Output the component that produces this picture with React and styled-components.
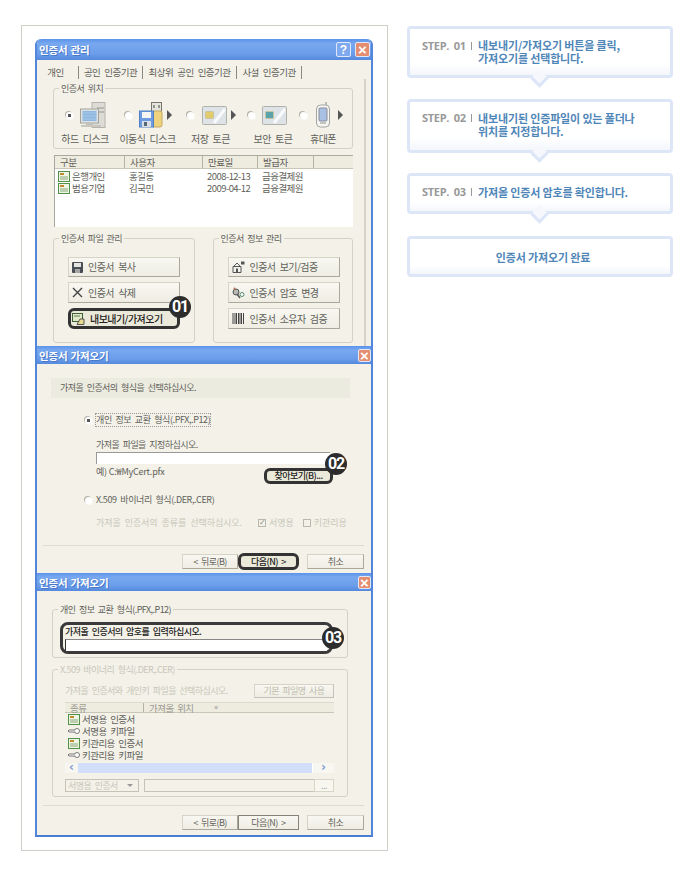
import React from 'react';
import styled, { createGlobalStyle, css } from 'styled-components';

const GlobalStyle = createGlobalStyle`
  html, body { margin: 0; padding: 0; background: #fff; }
  body { font-family: "Noto Sans CJK KR", "Noto Sans", sans-serif; }
`;

const dlgText = css`
  font-size: 9px;
  line-height: 12px;
  letter-spacing: -0.55px;
  word-spacing: 2px;
  white-space: nowrap;
  color: #5f5f5a;
`;

const Page = styled.div`
  display: flex;
  align-items: flex-start;
  width: 690px;
  height: 873px;
  padding: 25px 0 0 21px;
  box-sizing: border-box;
`;

const Frame = styled.div`
  width: 367px;
  box-sizing: border-box;
  border: 1px solid #cfcfc8;
  padding: 13px 14px 13px 13px;
`;

const Win = styled.section`
  display: flex;
  flex-direction: column;
  height: ${p => p.$h}px;
  box-sizing: border-box;
  position: relative;
  overflow: hidden;
  background: #f3f1e8;
  border-left: 2px solid #5286da;
  border-right: 2px solid #5286da;
  border-bottom: ${p => (p.$last ? 2 : 0)}px solid #4a7ed2;
  border-radius: ${p => (p.$round ? '6px 6px 0 0' : '0')};
`;

const TitleBar = styled.header`
  flex: none;
  display: flex;
  align-items: center;
  height: ${p => p.$h}px;
  margin: 0 -2px;
  padding: 0 ${p => p.$pr}px 0 4px;
  gap: 4px;
  background: linear-gradient(180deg, #5a93ea 0%, #78a8ef 22%, #6b9dea 70%, #5589dd 100%);
`;

const TitleText = styled.h1`
  flex: 1;
  margin: 0;
  font-size: 10.5px;
  font-weight: 700;
  letter-spacing: -0.2px;
  word-spacing: 1px;
  color: #fff;
  text-shadow: 1px 1px 0 #4a78c8;
`;

const CapBtn = styled.span`
  width: ${p => p.$size}px;
  height: ${p => p.$size}px;
  box-sizing: border-box;
  display: flex;
  align-items: center;
  justify-content: center;
  border: 1px solid #dfe8fa;
  border-radius: 2px;
  color: #fff;
  font: 700 ${p => (p.$close ? 15 : 12)}px/1 "Liberation Sans", sans-serif;
  background: ${p => (p.$close ? '#e48d70' : '#7fa9ee')};
`;

const Tabs = styled.nav`
  display: flex;
  align-items: center;
  height: 13px;
  margin: 6px 0 0 3px;
`;

const Tab = styled.span`
  ${dlgText}
  font-size: 9.5px;
  word-spacing: 2.5px;
  box-sizing: border-box;
  width: ${p => p.$w}px;
  padding-right: ${p => p.$pr || 0}px;
  text-align: center;
  border-right: 1px solid #8b8a80;
  line-height: 13px;
`;

const Panel = styled.div`
  margin: 0 5px 0 4px;
  padding: 9px 11px 0 12px;
  border-right: 2px solid #d6d3c6;
  flex: 1;
`;

const Group = styled.div`
  position: relative;
  box-sizing: border-box;
  width: ${p => p.$w}px;
  height: ${p => p.$h}px;
  border: 1px solid #d4d2c4;
  border-radius: 3px;
`;

const Legend = styled.span`
  ${dlgText}
  position: absolute;
  top: -6px;
  left: 5px;
  padding: 0 2px;
  background: #f3f1e8;
  color: ${p => (p.$off ? '#c9c7ba' : '#5f5f5a')};
`;

const Locations = styled.div`
  display: flex;
  padding-top: 13px;
`;

const Location = styled.div`
  display: flex;
  flex-direction: column;
  width: ${p => p.$w}px;
`;

const LocTop = styled.div`
  display: flex;
  align-items: center;
  height: 26px;
  padding-left: ${p => p.$pad}px;
`;

const LocLabel = styled.span`
  ${dlgText}
  margin-top: 5px;
  padding-left: ${p => p.$pl || 0}px;
  text-align: center;
  font-size: 10px;
  word-spacing: 2.5px;
`;

const Radio = styled.span`
  flex: none;
  width: 7px;
  height: 7px;
  margin-right: ${p => p.$mr || 0}px;
  border-radius: 50%;
  background: ${p => (p.$on ? 'radial-gradient(circle, #555 0 1.5px, #fff 2px)' : '#fff')};
  box-shadow: -1px -1px 0 #b5b3a8, 1px 1px 0 #fbfaf5;
`;

const Pointer = styled.span`
  flex: none;
  width: 0;
  height: 0;
  margin-left: ${p => p.$ml}px;
  border-left: 5px solid #555;
  border-top: 5px solid transparent;
  border-bottom: 5px solid transparent;
`;

const CertList = styled.div`
  box-sizing: border-box;
  height: 72px;
  margin: 6px 0 11px 1px;
  width: 299px;
  background: #fff;
  border-top: 1px solid #aaa99f;
  border-left: 1px solid #aaa99f;
`;

const ListHead = styled.div`
  display: flex;
  height: ${p => p.$h}px;
  margin-bottom: ${p => p.$mb || 0}px;
  background: #eeebdf;
  border-bottom: 1px solid #c9c6b8;
  border-top: ${p => (p.$line ? '1px solid #dcdacd' : '0')};
  position: relative;
`;

const HeadCell = styled.span`
  ${dlgText}
  font-size: 9.5px;
  line-height: ${p => p.$lh || 12}px;
  box-sizing: border-box;
  width: ${p => p.$w}px;
  padding-left: ${p => p.$pad || 5}px;
  border-right: ${p => (p.$end ? 0 : 1)}px solid #b5b3a6;
  color: ${p => (p.$off ? '#9a998f' : '#5f5f5a')};
`;

const SortMark = styled.span`
  position: absolute;
  left: 149px;
  top: 1px;
  font-size: 5px;
  line-height: 5px;
  color: #888;
`;

const ListRow = styled.div`
  display: flex;
  align-items: center;
  height: 12px;
  padding-left: ${p => p.$pad || 3}px;
`;

const Cell = styled.span`
  ${dlgText}
  display: flex;
  align-items: center;
  gap: 2px;
  width: ${p => p.$w}px;
  font-size: 9.5px;
`;

const ManageRow = styled.div`
  display: flex;
  gap: 18px;
`;

const BtnStack = styled.div`
  display: flex;
  flex-direction: column;
  gap: 5px;
  padding: 18px 0 0 14px;
`;

const Btn = styled.button`
  ${dlgText}
  display: flex;
  align-items: center;
  justify-content: ${p => (p.$left ? 'flex-start' : 'center')};
  gap: 5px;
  box-sizing: border-box;
  width: ${p => p.$w}px;
  height: ${p => p.$h}px;
  padding: 0 0 0 ${p => (p.$left ? (p.$mark ? 1 : 3) : 0)}px;
  margin: 0;
  font-family: inherit;
  font-size: ${p => (p.$left ? '10px' : '9px')};
  word-spacing: ${p => (p.$left ? 2.5 : 2)}px;
  background: linear-gradient(180deg, #f8f7f1, #efede3);
  border: 1px solid #d6d4c6;
  border-right-color: ${p => (p.$off ? '#c4c2b6' : '#aaa89b')};
  border-bottom-color: ${p => (p.$off ? '#c4c2b6' : '#aaa89b')};
  color: ${p => (p.$off ? '#bdbbae' : '#5f5f5a')};

  ${p => p.$primary && css`
    border: 1px solid #85847a;
  `}

  ${p => p.$mark && css`
    position: relative;
    border: 3px solid #333;
    border-radius: 6px;
    color: #222;
    font-weight: 500;
    background: #ebe9d9;
  `}
`;

const Badge = styled.span`
  position: absolute;
  top: ${p => p.$top}px;
  left: ${p => p.$left}px;
  width: 22px;
  height: 22px;
  border-radius: 50%;
  background: #2c2c2c;
  color: #fff;
  display: flex;
  align-items: center;
  justify-content: center;
  font: 700 16px/1 "Roboto", sans-serif;
  letter-spacing: -1.2px;
  z-index: 2;
`;

const Band = styled.div`
  ${dlgText}
  height: 20px;
  box-sizing: border-box;
  margin: 14px 21px 0 14px;
  padding-left: 9px;
  line-height: 20px;
  background: #ecebdf;
`;

const Options = styled.div`
  padding-left: 48px;
`;

const OptionRow = styled.div`
  display: flex;
  align-items: center;
  gap: 4px;
  height: 12px;
  margin-top: ${p => p.$mt}px;
`;

const OptionLabel = styled.span`
  ${dlgText}
  letter-spacing: -0.4px;
  ${p => p.$focus && css`outline: 1px dotted #999;`}
`;

const Sub = styled.div`
  ${dlgText}
  margin: ${p => p.$mt || 0}px 0 0 11px;
  color: ${p => (p.$off ? '#c9c7ba' : '#5f5f5a')};
  display: flex;
  align-items: center;
  gap: ${p => p.$gap || 0}px;
  ${p => p.$off && css`
    letter-spacing: -0.05px;
  `}
`;

const FileInput = styled.div`
  width: 234px;
  height: 12px;
  margin: 1px 0 2px 11px;
  background: #fff;
  border-top: 1px solid #999;
  border-left: 1px solid #999;
  box-sizing: border-box;
`;

const ExampleRow = styled.div`
  display: flex;
  justify-content: space-between;
  width: 237px;
  height: 18px;
  margin-left: 11px;
  align-items: flex-end;
`;

const Example = styled.span`
  ${dlgText}
  align-self: flex-start;
  letter-spacing: -0.2px;
  word-spacing: 0;
`;

const Check = styled.span`
  width: 8px;
  height: 8px;
  margin-left: ${p => p.$ml}px;
  box-sizing: border-box;
  border: 1px solid #b9b7aa;
  color: #8c8b80;
  font: 700 8px/6px "DejaVu Sans", sans-serif;
`;

const Footer = styled.footer`
  flex: none;
  margin: auto 7px 0 6px;
  height: ${p => p.$h}px;
  box-sizing: border-box;
  padding-top: ${p => p.$pt}px;
  border-top: 1px solid #dedcd0;
  display: flex;
  align-items: flex-start;
  justify-content: flex-end;
`;

const NextSlot = styled.div`
  margin: ${p => (p.$mark ? -1 : 0)}px 8px 0 0;
`;

const PassGroup = styled.div`
  margin: 18px 0 0 15px;
`;

const PassBox = styled.div`
  position: relative;
  box-sizing: border-box;
  width: 273px;
  height: 32px;
  margin: 12px 0 0 7px;
  padding: 1px 2px 0 2px;
  border: 3px solid #3a3a3a;
  border-radius: 8px;
`;

const PassLabel = styled.div`
  ${dlgText}
  height: 12px;
  line-height: 12px;
  color: #222;
  font-weight: 500;
`;

const PassInput = styled.div`
  height: 12px;
  margin-top: 1px;
  width: 262px;
  background: #fff;
  border-top: 1px solid #888;
  border-left: 1px solid #333;
  box-sizing: border-box;
`;

const OffGroup = styled.div`
  margin: 11px 0 0 15px;
`;

const OffInner = styled.div`
  padding: 14px 0 0 12px;
  width: 269px;
`;

const OffRow = styled.div`
  display: flex;
  justify-content: space-between;
  align-items: center;
  height: 14px;
`;

const OffText = styled.span`
  ${dlgText}
  color: #c9c7ba;
`;

const OffList = styled.div`
  margin-top: 4px;
`;

const ScrollBar = styled.div`
  display: flex;
  height: 10px;
  margin-top: 2px;
  background: #f7f6f0;
`;

const ScrollEnd = styled.span`
  flex: none;
  width: ${p => p.$w}px;
  text-align: center;
  color: #7f9bd2;
  font: 700 12px/9px "DejaVu Sans", sans-serif;
`;

const ScrollThumb = styled.span`
  flex: 1;
  background: #d3dffa;
  border-right: 1px solid #fff;
`;

const FieldRow = styled.div`
  display: flex;
  margin-top: 6px;
  height: 13px;
`;

const Combo = styled.div`
  ${dlgText}
  color: #c9c7ba;
  display: flex;
  justify-content: space-between;
  align-items: center;
  box-sizing: border-box;
  width: 74px;
  padding: 0 2px;
  border: 1px solid #c5c3b6;
  margin-right: 5px;
`;

const ComboBtn = styled.span`
  width: 0;
  height: 0;
  margin-right: 3px;
  border-top: 3px solid #999;
  border-left: 3px solid transparent;
  border-right: 3px solid transparent;
`;

const PathField = styled.div`
  flex: 1;
  border: 1px solid #c5c3b6;
  border-right: 0;
`;

const Dots = styled.div`
  ${dlgText}
  width: 20px;
  text-align: center;
  color: #aaa;
  background: #f7f6ef;
  border: 1px solid #d8d6c8;
  box-sizing: border-box;
`;

const Steps = styled.aside`
  display: flex;
  flex-direction: column;
  margin: 1px 0 0 19px;
  width: 266px;
`;

const StepBox = styled.div`
  position: relative;
  display: flex;
  align-items: center;
  justify-content: ${p => (p.$center ? 'center' : 'flex-start')};
  box-sizing: border-box;
  height: ${p => p.$h}px;
  margin-bottom: ${p => p.$mb || 0}px;
  padding: ${p => p.$pt || 0}px 0 ${p => p.$pb || 0}px ${p => (p.$center ? 6 : 12)}px;
  border: 3px solid #dce6f6;
  border-radius: 4px;
  background: linear-gradient(180deg, #fff 75%, #f3f6fb 100%);

  ${p => p.$arrow && css`
    &::after {
      content: '';
      position: absolute;
      left: 123px;
      bottom: -10px;
      width: 13px;
      height: 13px;
      box-sizing: border-box;
      transform: rotate(45deg);
      background: #f5f7fc;
      border-right: 3px solid #dce6f6;
      border-bottom: 3px solid #dce6f6;
    }
  `}
`;

const StepNo = styled.span`
  flex: none;
  align-self: flex-start;
  margin-top: ${p => p.$mt}px;
  width: 56px;
  font: 700 11px/13px "Open Sans", sans-serif;
  letter-spacing: -0.3px;
  word-spacing: 2px;
  color: #999;
  white-space: nowrap;
  position: relative;

  &::after {
    content: '';
    position: absolute;
    left: 49px;
    top: 3px;
    width: 1px;
    height: 8px;
    background: #999;
  }
`;

const StepText = styled.p`
  margin: 0;
  font-size: 11px;
  font-weight: 700;
  line-height: 13px;
  letter-spacing: -0.15px;
  color: #4f86b8;
  white-space: nowrap;
`;

const CertIcon = () => (
  <svg width="12" height="11" viewBox="0 0 12 11">
    <rect x="0.5" y="0.5" width="11" height="10" fill="#eef5e4" stroke="#4f9148" />
    <rect x="2" y="2" width="4" height="2" fill="#c58a2c" />
    <path d="M2 6h8M2 8h8" stroke="#8aa87a" />
  </svg>
);

const KeyIcon = () => (
  <svg width="12" height="8" viewBox="0 0 12 8">
    <circle cx="9" cy="4" r="2.5" fill="#fff" stroke="#777" />
    <path d="M7 3H1L0 4l1 1h6" fill="#fff" stroke="#777" />
  </svg>
);

const ComputerIcon = () => (
  <svg width="26" height="26" viewBox="0 0 26 26">
    <rect x="12" y="0.5" width="13" height="25" fill="#dcdbd5" stroke="#b5b4ac" />
    <path d="M17 6h7M17 10h7" stroke="#94938b" />
    <rect x="0.5" y="7" width="18" height="14" fill="#dfe2e2" stroke="#a3a39c" />
    <rect x="2.5" y="9" width="14" height="10" fill="#8db6e0" />
    <path d="M3 11h13M3 14h13M3 17h13" stroke="#a9cbe8" />
    <rect x="6" y="21" width="7" height="2" fill="#c3c2ba" />
    <rect x="1" y="23" width="20" height="2" fill="#c9c8c0" />
  </svg>
);

const RemovableIcon = () => (
  <svg width="25" height="26" viewBox="0 0 25 26">
    <rect x="12.5" y="0.5" width="10" height="9" fill="#e4e3dc" stroke="#77766f" />
    <path d="M15 3v3M20 3v3" stroke="#444" />
    <rect x="13" y="9" width="10" height="16" rx="2" fill="#efd27e" stroke="#c4a860" />
    <rect x="0.5" y="9" width="14" height="16" fill="#6f9ce0" stroke="#4f7fc4" />
    <rect x="3" y="10" width="9" height="6" fill="#f6f6f2" />
    <rect x="3" y="19" width="9" height="6" fill="#d9dde6" />
    <rect x="5" y="20" width="3" height="4" fill="#567" />
  </svg>
);

const TokenIcon = ({ chip }) => (
  <svg width="25" height="19" viewBox="0 0 25 19">
    <rect x="0.5" y="0.5" width="24" height="18" rx="1" fill="#dde3e6" stroke="#b3b2aa" />
    <path d="M12 17L23 3" stroke="#f8fafb" strokeWidth="3" />
    <rect x="3.5" y="5.5" width="8" height="7" rx="1" fill={chip} stroke="#c9c4a0" />
  </svg>
);

const PhoneIcon = () => (
  <svg width="14" height="26" viewBox="0 0 14 26">
    <path d="M10 0v3" stroke="#888" />
    <rect x="0.5" y="3" width="13" height="22" rx="4" fill="#f6f6f2" stroke="#a3a3a0" />
    <rect x="3" y="6" width="8" height="13" rx="1" fill="#a8c0e4" stroke="#8a8c98" />
    <path d="M4 21h6" stroke="#c4c4c0" strokeWidth="2" />
  </svg>
);

const FloppyIcon = () => (
  <svg width="11" height="11" viewBox="0 0 11 11">
    <rect width="11" height="11" rx="1" fill="#4a4f55" />
    <rect x="2" y="1" width="7" height="4" fill="#e4e4e0" />
    <rect x="3" y="7" width="5" height="4" fill="#a5a5a5" />
  </svg>
);

const CrossIcon = () => (
  <svg width="11" height="11" viewBox="0 0 11 11">
    <path d="M1 1l9 9M10 1l-9 9" stroke="#444" strokeWidth="1.4" />
  </svg>
);

const ExportIcon = () => (
  <svg width="13" height="12" viewBox="0 0 13 12">
    <rect x="0.5" y="0.5" width="10" height="8" fill="#dfe9c8" stroke="#3f5f38" />
    <path d="M2 3h6" stroke="#5a7a50" />
    <path d="M5 11.5h7V6H8z" fill="#e8d890" stroke="#555" />
  </svg>
);

const ViewIcon = () => (
  <svg width="13" height="12" viewBox="0 0 13 12">
    <path d="M1 5.5h8v6H1z" fill="#f2f2ee" stroke="#555" />
    <path d="M2 5l3-3 3 3" fill="none" stroke="#555" />
    <rect x="4" y="7.5" width="2" height="4" fill="#555" />
    <path d="M9 0.5h3.5v3H9z" fill="#555" />
  </svg>
);

const LockKeyIcon = () => (
  <svg width="13" height="12" viewBox="0 0 13 12">
    <circle cx="4" cy="5" r="3" fill="#b8b8b4" stroke="#555" />
    <path d="M5 7l3 4" stroke="#555" strokeWidth="1.5" />
    <circle cx="10" cy="7.5" r="2" fill="#fff" stroke="#4f8a6a" />
    <circle cx="2.5" cy="1.5" r="1" fill="#c96a4a" />
  </svg>
);

const BarcodeIcon = () => (
  <svg width="13" height="11" viewBox="0 0 13 11">
    <path d="M1 0v11M3 0v11M4.5 0v11M6.5 0v11M8 0v11M9.5 0v11M11.5 0v11" stroke="#444" />
  </svg>
);

const locations = [
  { w: 62, pad: 12, mr: 7, label: '하드 디스크', on: true, icon: <ComputerIcon /> },
  { w: 63, pad: 9, mr: 7, label: '이동식 디스크', icon: <RemovableIcon />, arrow: 3 },
  { w: 63, pad: 8, mr: 8, label: '저장 토큰', icon: <TokenIcon chip="#e2cb6a" />, arrow: 4 },
  { w: 58, pad: 6, mr: 7, lp: 4, label: '보안 토큰', icon: <TokenIcon chip="#5ba3a8" /> },
  { w: 46, pad: 0, mr: 9, label: '휴대폰', icon: <PhoneIcon />, arrow: 8 },
];

const certs = [
  { kind: '은행개인', user: '홍길동', date: '2008-12-13' },
  { kind: '범용기업', user: '김국민', date: '2009-04-12' },
];

const offRows = [
  { icon: <CertIcon />, label: '서명용 인증서' },
  { icon: <KeyIcon />, label: '서명용 키파일' },
  { icon: <CertIcon />, label: '키관리용 인증서' },
  { icon: <KeyIcon />, label: '키관리용 키파일' },
];

const steps = [
  { no: 'STEP. 01', lines: ['내보내기/가져오기 버튼을 클릭,', '가져오기를 선택합니다.'], h: 52, mb: 21, mt: 10 },
  { no: 'STEP. 02', lines: ['내보내기된 인증파일이 있는 폴더나', '위치를 지정합니다.'], h: 54, mb: 20, mt: 9, pb: 2 },
  { no: 'STEP. 03', lines: ['가져올 인증서 암호를 확인합니다.'], h: 41, mb: 22, mt: 9, pb: 2 },
];

function WizardFooter({ mark, h, pt }) {
  return (
    <Footer $h={h} $pt={pt}>
      <Btn $w={56} $h={15}>&lt; 뒤로(B)</Btn>
      <NextSlot $mark={mark}>
        <Btn $w={61} $h={mark ? 17 : 15} $mark={mark} $primary>다음(N) &gt;</Btn>
      </NextSlot>
      <Btn $w={57} $h={15}>취소</Btn>
    </Footer>
  );
}

export default function App() {
  return (
    <Page>
      <GlobalStyle />
      <Frame>
        <Win $h={307} $round>
          <TitleBar $h={21} $pr={3}>
            <TitleText>인증서 관리</TitleText>
            <CapBtn $size={15}>?</CapBtn>
            <CapBtn $size={15} $close>×</CapBtn>
          </TitleBar>
          <Tabs>
            <Tab $w={39} $pr={7}>개인</Tab>
            <Tab $w={64}>공인 인증기관</Tab>
            <Tab $w={94}>최상위 공인 인증기관</Tab>
            <Tab $w={65}>사설 인증기관</Tab>
          </Tabs>
          <Panel>
            <Group $w={300} $h={61}>
              <Legend>인증서 위치</Legend>
              <Locations>
                {locations.map(loc => (
                  <Location key={loc.label} $w={loc.w}>
                    <LocTop $pad={loc.pad}>
                      <Radio $on={loc.on} $mr={loc.mr} />
                      {loc.icon}
                      {loc.arrow && <Pointer $ml={loc.arrow} />}
                    </LocTop>
                    <LocLabel $pl={loc.lp}>{loc.label}</LocLabel>
                  </Location>
                ))}
              </Locations>
            </Group>
            <CertList>
              <ListHead $h={12} $mb={1}>
                <HeadCell $w={70}>구분</HeadCell>
                <HeadCell $w={78}>사용자</HeadCell>
                <HeadCell $w={55}>만료일</HeadCell>
                <HeadCell $w={56}>발급자</HeadCell>
              </ListHead>
              {certs.map(cert => (
                <ListRow key={cert.kind}>
                  <Cell $w={71}><CertIcon />{cert.kind}</Cell>
                  <Cell $w={78}>{cert.user}</Cell>
                  <Cell $w={55}>{cert.date}</Cell>
                  <Cell $w={55}>금융결제원</Cell>
                </ListRow>
              ))}
            </CertList>
            <ManageRow>
              <Group $w={142} $h={105}>
                <Legend>인증서 파일 관리</Legend>
                <BtnStack>
                  <Btn $w={112} $h={20} $left><FloppyIcon />인증서 복사</Btn>
                  <Btn $w={112} $h={21} $left><CrossIcon />인증서 삭제</Btn>
                  <Btn $w={112} $h={21} $left $mark>
                    <ExportIcon />내보내기/가져오기
                    <Badge $top={-15} $left={98}>01</Badge>
                  </Btn>
                </BtnStack>
              </Group>
              <Group $w={141} $h={105}>
                <Legend>인증서 정보 관리</Legend>
                <BtnStack>
                  <Btn $w={112} $h={20} $left><ViewIcon />인증서 보기/검증</Btn>
                  <Btn $w={112} $h={21} $left><LockKeyIcon />인증서 암호 변경</Btn>
                  <Btn $w={112} $h={21} $left><BarcodeIcon />인증서 소유자 검증</Btn>
                </BtnStack>
              </Group>
            </ManageRow>
          </Panel>
        </Win>

        <Win $h={227}>
          <TitleBar $h={18} $pr={2}>
            <TitleText>인증서 가져오기</TitleText>
            <CapBtn $size={13} $close>×</CapBtn>
          </TitleBar>
          <Band>가져올 인증서의 형식을 선택하십시오.</Band>
          <Options>
            <OptionRow $mt={16}>
              <Radio $on />
              <OptionLabel $focus>개인 정보 교환 형식(.PFX,.P12)</OptionLabel>
            </OptionRow>
            <Sub $mt={13}>가져올 파일을 지정하십시오.</Sub>
            <FileInput />
            <ExampleRow>
              <Example>예) C:₩MyCert.pfx</Example>
              <Btn $w={69} $h={16} $mark>
                찾아보기(B)...
                <Badge $top={-18} $left={58}>02</Badge>
              </Btn>
            </ExampleRow>
            <OptionRow $mt={10}>
              <Radio />
              <OptionLabel>X.509 바이너리 형식(.DER,.CER)</OptionLabel>
            </OptionRow>
            <Sub $mt={11} $gap={3} $off>
              가져올 인증서의 종류를 선택하십시오.
              <Check $ml={13}>✓</Check>서명용
              <Check $ml={6} />키관리용
            </Sub>
          </Options>
          <WizardFooter h={28} pt={8} mark />
        </Win>

        <Win $h={264} $last>
          <TitleBar $h={18} $pr={2}>
            <TitleText>인증서 가져오기</TitleText>
            <CapBtn $size={13} $close>×</CapBtn>
          </TitleBar>
          <PassGroup>
            <Group $w={296} $h={49}>
              <Legend>개인 정보 교환 형식(.PFX,.P12)</Legend>
              <PassBox>
                <PassLabel>가져올 인증서의 암호를 입력하십시오.</PassLabel>
                <PassInput />
                <Badge $top={2} $left={259}>03</Badge>
              </PassBox>
            </Group>
          </PassGroup>
          <OffGroup>
            <Group $w={296} $h={128}>
              <Legend $off>X.509 바이너리 형식(.DER,.CER)</Legend>
              <OffInner>
                <OffRow>
                  <OffText>가져올 인증서와 개인키 파일을 선택하십시오.</OffText>
                  <Btn $w={80} $h={14} $off>기본 파일명 사용</Btn>
                </OffRow>
                <OffList>
                  <ListHead $h={9} $line>
                    <HeadCell $w={79} $lh={10} $off>종류</HeadCell>
                    <HeadCell $w={190} $lh={10} $off $end>가져올 위치</HeadCell>
                    <SortMark>≋</SortMark>
                  </ListHead>
                  {offRows.map(row => (
                    <ListRow key={row.label}>
                      <Cell $w={200}>{row.icon}{row.label}</Cell>
                    </ListRow>
                  ))}
                </OffList>
                <ScrollBar>
                  <ScrollEnd $w={13}>‹</ScrollEnd>
                  <ScrollThumb />
                  <ScrollEnd $w={21}>›</ScrollEnd>
                </ScrollBar>
                <FieldRow>
                  <Combo>서명용 인증서<ComboBtn /></Combo>
                  <PathField />
                  <Dots>...</Dots>
                </FieldRow>
              </OffInner>
            </Group>
          </OffGroup>
          <WizardFooter h={30} pt={9} />
        </Win>
      </Frame>

      <Steps>
        {steps.map(step => (
          <StepBox key={step.no} $h={step.h} $mb={step.mb} $pb={step.pb} $arrow>
            <StepNo $mt={step.mt}>{step.no}</StepNo>
            <StepText>
              {step.lines.map(line => <div key={line}>{line}</div>)}
            </StepText>
          </StepBox>
        ))}
        <StepBox $h={41} $pt={2} $center>
          <StepText>인증서 가져오기 완료</StepText>
        </StepBox>
      </Steps>
    </Page>
  );
}
